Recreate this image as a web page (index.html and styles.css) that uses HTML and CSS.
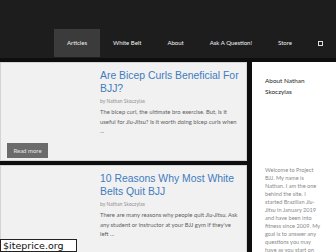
FILE: index.html
```html
<!DOCTYPE html>
<html lang="en">
<head>
  <meta charset="UTF-8">
  <meta name="viewport" content="width=device-width, initial-scale=1">
  <title>Project BJJ</title>
  <link rel="stylesheet" href="styles.css">
</head>
<body>
  <header class="site-header">
    <ul class="nav-menu">
      <li class="active"><a href="#">Articles</a></li>
      <li><a href="#">White Belt</a></li>
      <li><a href="#">About</a></li>
      <li><a href="#">Ask A Question!</a></li>
      <li><a href="#">Store</a></li>
      <li><a href="#" class="search" aria-label="search"><span class="search-box"></span></a></li>
    </ul>
  </header>
  <div class="page">
    <main class="posts">
      <article class="post">
        <div class="thumb">
          <a href="#" class="btn">Read more</a>
        </div>
        <div class="post-body">
          <h2 class="post-title">Are Bicep Curls Beneficial For BJJ?</h2>
          <p class="byline">by Nathan Skoczylas</p>
          <p class="excerpt">The bicep curl, the ultimate bro exercise. But, is it<br>useful for <em>Jiu-Jitsu</em>? Is it worth doing bicep curls when<br>...</p>
        </div>
      </article>
      <article class="post">
        <div class="thumb">
          <a href="#" class="btn">Read more</a>
        </div>
        <div class="post-body">
          <h2 class="post-title">10 Reasons Why Most White Belts Quit BJJ</h2>
          <p class="byline">by Nathan Skoczylas</p>
          <p class="excerpt">There are many reasons why people quit <em>Jiu-Jitsu</em>. Ask<br>any student or instructor at your BJJ gym if they've<br>left ...</p>
        </div>
      </article>
    </main>
    <aside class="sidebar">
      <h3 class="widget-title">About Nathan Skoczylas</h3>
      <div class="about-photo"></div>
      <p class="about-text">Welcome to Project BJJ. My name is Nathan. I am the one behind the site. I started Brazilian <em>Jiu-Jitsu</em> in January 2019 and have been into fitness since 2009. My goal is to answer any questions you may have as you start on your journey.</p>
    </aside>
  </div>
  <div class="watermark">$iteprice.org</div>
</body>
</html>
```

FILE: styles.css
```css
:root {
  --header: #1d1d1d;
  --gap: #0e0e0e;
  --card: #f1f1f1;
  --blue: #3f7cbf;
  --muted: #777;
}
* { margin: 0; padding: 0; box-sizing: border-box; }
html, body { height: 100%; overflow: hidden; }
body {
  font-family: 'Lato', sans-serif;
  background: var(--gap);
  color: #333;
}
a { text-decoration: none; color: inherit; }
.site-header { height: 58px; background: var(--header); }
.nav-menu { list-style: none; display: flex; padding: 29px 0 0 54px; }
.nav-menu li a { display: block; height: 28px; line-height: 28px; padding: 0 13px; font-size: 6px; color: #f2f2f2; }
.nav-menu li.active a { background: #3b3b3b; }
.search { display: flex !important; align-items: center; }
.search-box { display: block; width: 5px; height: 5px; border: 1px solid #ddd; }
.page { display: flex; gap: 5px; margin-top: 4px; height: calc(100% - 62px); }
.posts { width: 247px; display: flex; flex-direction: column; gap: 4px; }
.post { display: grid; grid-template-columns: 93px minmax(0, 1fr); height: 99px; background: var(--card); border: 1px solid #d4d4d4; padding: 6px 6px 2px 6px; flex-shrink: 0; }
.thumb { display: flex; align-items: flex-end; }
.btn { display: block; width: 41px; height: 15px; line-height: 15px; text-align: center; background: #6b6b6b; color: #e6e6e6; font-size: 6px; }
.post-title { font-family: 'Liberation Sans', Arial, sans-serif; font-weight: 400; font-size: 10.4px; line-height: 13px; color: var(--blue); }
.byline { margin-top: 3px; font-size: 4.8px; line-height: 6px; letter-spacing: 0.1px; color: #8c8c8c; }
.excerpt { margin-top: 3px; font-size: 5.9px; line-height: 9.5px; color: #5e5e5e; white-space: nowrap; }
.sidebar { flex: 1; background: #fff; padding: 13px 13px 0 13px; }
.widget-title { font-weight: 400; font-size: 6.4px; line-height: 11px; color: #222; }
.about-photo { height: 69px; }
.about-text { font-size: 5.6px; line-height: 8px; color: #8a8a8a; }
.watermark { position: absolute; left: 0; bottom: 0; width: 77px; height: 13px; background: #fff; border: 1px solid #222; font-family: 'DejaVu Sans', sans-serif; font-size: 9.5px; line-height: 11px; color: #111; padding-left: 2px; }
```
